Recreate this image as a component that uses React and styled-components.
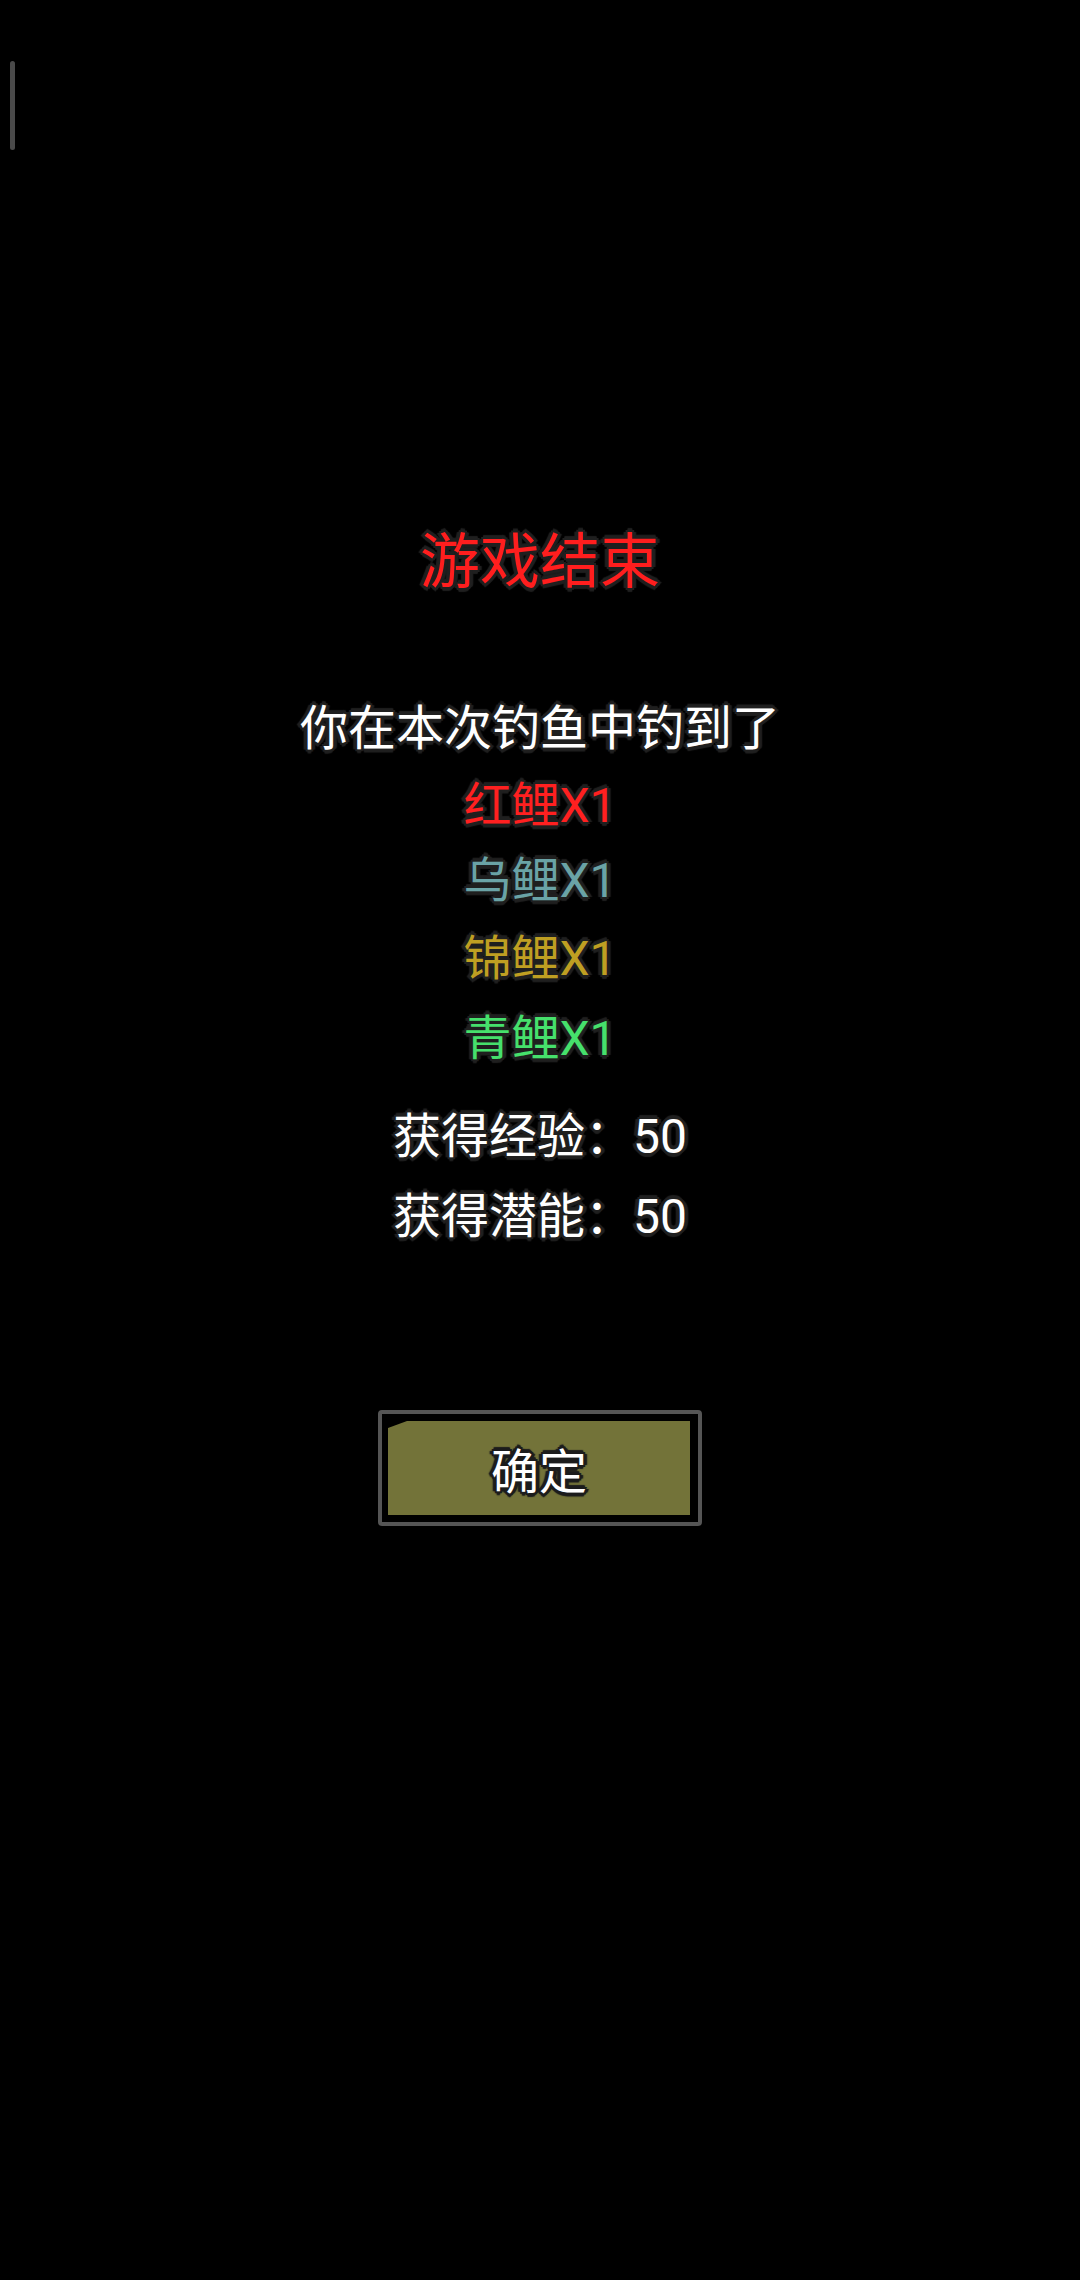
import React from "react";
import styled, { createGlobalStyle } from "styled-components";

const GlobalStyle = createGlobalStyle`
  html, body {
    margin: 0;
    padding: 0;
    background: #000;
  }
  body {
    font-family: Roboto, "Noto Sans CJK SC", sans-serif;
  }
`;

const outline = (c) => `
  text-shadow:
    3px 0 0 ${c}, -3px 0 0 ${c}, 0 3px 0 ${c}, 0 -3px 0 ${c},
    2px 2px 0 ${c}, -2px 2px 0 ${c}, 2px -2px 0 ${c}, -2px -2px 0 ${c},
    4px 0 1px ${c}, -4px 0 1px ${c}, 0 4px 1px ${c}, 0 -4px 1px ${c};
`;

const Screen = styled.div`
  position: relative;
  width: 1080px;
  min-height: 2280px;
  background: #000;
  display: flex;
  flex-direction: column;
  align-items: center;
  padding-top: 523px;
  box-sizing: border-box;
`;

const ScrollThumb = styled.div`
  position: absolute;
  left: 10px;
  top: 61px;
  width: 5px;
  height: 89px;
  border-radius: 3px;
  background: #4a4a4a;
`;

const Title = styled.div`
  font-size: 60px;
  line-height: 80px;
  color: #ff1e1e;
  ${outline("#1f1f1f")}
`;

const Line = styled.div`
  margin-top: ${(p) => p.$gap}px;
  font-size: ${(p) => p.$size || 48}px;
  line-height: 60px;
  color: ${(p) => p.$color || "#fff"};
  white-space: pre;
  ${outline("#1f1f1f")}
`;

const ButtonFrame = styled.div`
  margin-top: 163px;
  width: 324px;
  height: 116px;
  box-sizing: border-box;
  border: 4px solid #555;
  border-radius: 4px;
  padding: 7px 8px 7px 6px;
  background: #000;
`;

const ButtonFace = styled.div`
  width: 100%;
  height: 100%;
  background: #737339;
  clip-path: polygon(19px 0, 100% 0, 100% 100%, 0 100%, 0 7px);
  display: flex;
  align-items: center;
  justify-content: center;
  font-size: 48px;
  color: #fff;
  ${outline("#1c1c1c")}
`;

const fish = [
  { name: "红鲤X1", color: "#ff2020", gap: 17 },
  { name: "乌鲤X1", color: "#6aa3a6", gap: 15 },
  { name: "锦鲤X1", color: "#bf9f22", gap: 18 },
  { name: "青鲤X1", color: "#46e06c", gap: 20 },
];

export default function App() {
  return (
    <>
      <GlobalStyle />
      <Screen>
        <ScrollThumb />
        <Title>游戏结束</Title>
        <Line $gap={96} $size={48}>你在本次钓鱼中钓到了</Line>
        {fish.map((f) => (
          <Line key={f.name} $gap={f.gap} $color={f.color}>
            {f.name}
          </Line>
        ))}
        <Line $gap={38}>获得经验：50</Line>
        <Line $gap={20}>获得潜能：50</Line>
        <ButtonFrame>
          <ButtonFace>确定</ButtonFace>
        </ButtonFrame>
      </Screen>
    </>
  );
}
